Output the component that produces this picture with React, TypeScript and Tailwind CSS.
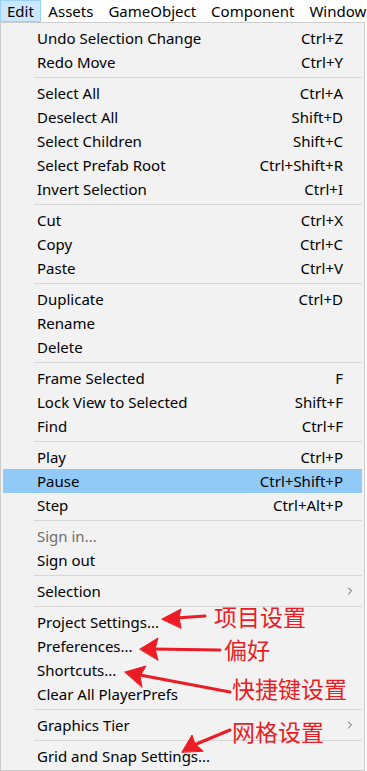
import { ChevronRight } from "lucide-react";

type Item =
  | { sep: true }
  | { label: string; shortcut?: string; sub?: boolean; disabled?: boolean; active?: boolean };

const items: Item[] = [
  { label: "Undo Selection Change", shortcut: "Ctrl+Z" },
  { label: "Redo Move", shortcut: "Ctrl+Y" },
  { sep: true },
  { label: "Select All", shortcut: "Ctrl+A" },
  { label: "Deselect All", shortcut: "Shift+D" },
  { label: "Select Children", shortcut: "Shift+C" },
  { label: "Select Prefab Root", shortcut: "Ctrl+Shift+R" },
  { label: "Invert Selection", shortcut: "Ctrl+I" },
  { sep: true },
  { label: "Cut", shortcut: "Ctrl+X" },
  { label: "Copy", shortcut: "Ctrl+C" },
  { label: "Paste", shortcut: "Ctrl+V" },
  { sep: true },
  { label: "Duplicate", shortcut: "Ctrl+D" },
  { label: "Rename" },
  { label: "Delete" },
  { sep: true },
  { label: "Frame Selected", shortcut: "F" },
  { label: "Lock View to Selected", shortcut: "Shift+F" },
  { label: "Find", shortcut: "Ctrl+F" },
  { sep: true },
  { label: "Play", shortcut: "Ctrl+P" },
  { label: "Pause", shortcut: "Ctrl+Shift+P", active: true },
  { label: "Step", shortcut: "Ctrl+Alt+P" },
  { sep: true },
  { label: "Sign in...", disabled: true },
  { label: "Sign out" },
  { sep: true },
  { label: "Selection", sub: true },
  { sep: true },
  { label: "Project Settings..." },
  { label: "Preferences..." },
  { label: "Shortcuts..." },
  { label: "Clear All PlayerPrefs" },
  { sep: true },
  { label: "Graphics Tier", sub: true },
  { sep: true },
  { label: "Grid and Snap Settings..." },
];

const menus = ["Edit", "Assets", "GameObject", "Component", "Window"];

const cjk = { fontFamily: '"Noto Sans CJK SC", sans-serif' };

export default function App() {
  return (
    <div
      className="relative w-[367px] h-[771px] overflow-hidden bg-white text-[15px] text-black"
      style={{ fontFamily: '"Noto Sans", "Noto Sans CJK SC", sans-serif' }}
    >
      {/* menu bar */}
      <div className="flex h-[22px] items-center whitespace-nowrap">
        {menus.map((m, i) => (
          <div
            key={m}
            className={
              i === 0
                ? "h-[22px] px-[6px] flex items-center bg-[#cce8ff] border border-[#99d1ff]"
                : "px-[7.5px] flex items-center"
            }
          >
            {m}
          </div>
        ))}
      </div>

      {/* dropdown */}
      <div className="w-[365px] h-[749px] border border-[#cccccc] bg-[#f2f2f2] pt-[3px] px-[2px]">
        {items.map((it, i) =>
          "sep" in it ? (
            <div key={i} className="h-[7px] flex items-center pl-[31px]">
              <div className="h-px w-full bg-[#d7d7d7]" />
            </div>
          ) : (
            <div
              key={i}
              className={
                "h-[24px] flex items-center justify-between pl-[34px] pr-[19px] whitespace-nowrap " +
                (it.active ? "bg-[#91c9f7]" : "")
              }
            >
              <span className={it.disabled ? "text-[#6d6d6d]" : ""}>{it.label}</span>
              {it.shortcut && <span>{it.shortcut}</span>}
              {it.sub && <ChevronRight className="size-[12px] text-[#444] -mr-[13px]" strokeWidth={1.75} />}
            </div>
          )
        )}
      </div>

      {/* red annotations */}
      <svg className="absolute left-0 top-0 pointer-events-none" width="367" height="771">
        <g fill="#ec1c24" stroke="#ec1c24" strokeLinecap="round">
          <line x1="205" y1="616" x2="176" y2="618" strokeWidth="3" />
          <polygon points="162,619 181,609 179,617 181,628" />
          <line x1="220" y1="650" x2="152" y2="649" strokeWidth="3" />
          <polygon points="140,649 158,638 155,649 158,660" />
          <line x1="230" y1="692" x2="140" y2="675" strokeWidth="3" />
          <polygon points="125,672 146,666 140,676 142,687" />
          <line x1="230" y1="730" x2="194" y2="745" strokeWidth="3" />
          <polygon points="182,752 192,735 195,744 203,751" />
        </g>
      </svg>
      <span className="absolute left-[214px] top-[602px] text-[23px] leading-[28px] text-[#ec1c24]" style={cjk}>项目设置</span>
      <span className="absolute left-[224px] top-[635px] text-[23px] leading-[28px] text-[#ec1c24]" style={cjk}>偏好</span>
      <span className="absolute left-[232px] top-[674px] text-[23px] leading-[28px] text-[#ec1c24]" style={cjk}>快捷键设置</span>
      <span className="absolute left-[232px] top-[717px] text-[23px] leading-[28px] text-[#ec1c24]" style={cjk}>网格设置</span>
    </div>
  );
}
